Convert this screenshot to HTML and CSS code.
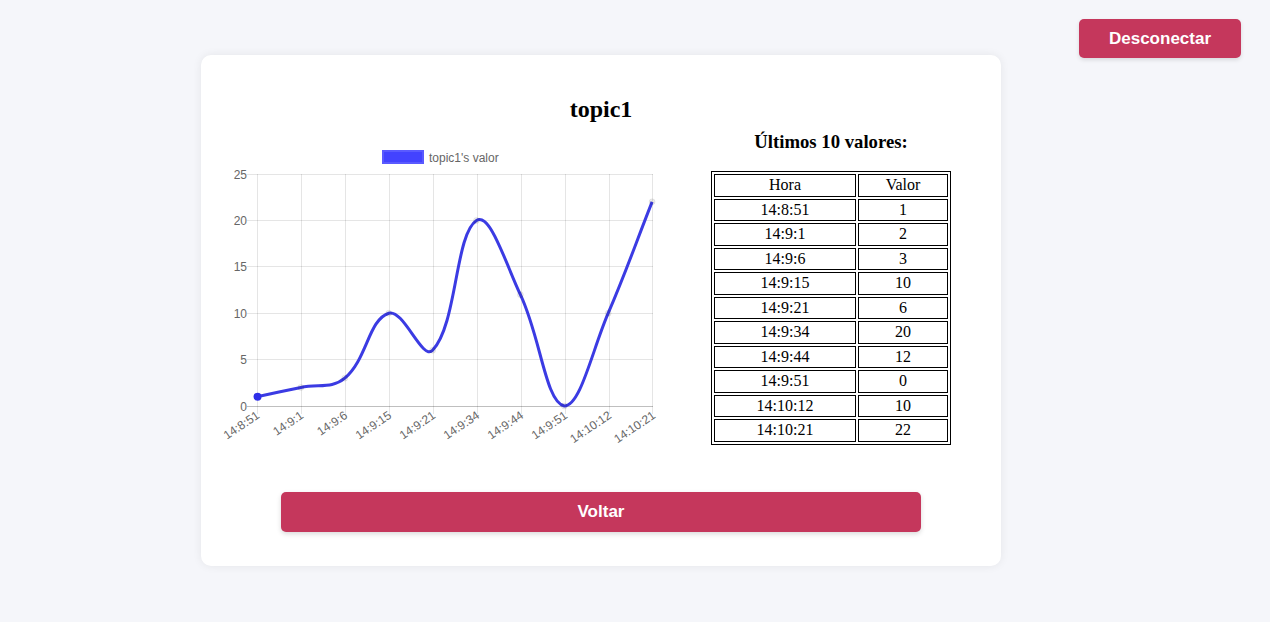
FILE: index.html
```html
<!DOCTYPE html>
<html lang="pt">
<head>
<meta charset="utf-8">
<title>topic1</title>
<link rel="stylesheet" href="styles.css">
</head>
<body>
<button class="logout">Desconectar</button>
<main class="card">
  <h2 class="title">topic1</h2>
  <div class="content">
    <div class="chart">
      <svg class="chart-svg" width="444" height="327" viewBox="217 123 444 327" xmlns="http://www.w3.org/2000/svg">
        <!-- legend -->
        <rect x="383" y="151" width="40" height="12" fill="#3333ff" fill-opacity="0.92" stroke="#5a5aff" stroke-width="2"/>
        <text class="tick" x="429" y="161.5">topic1's valor</text>
        <!-- grid -->
        <g class="grid" shape-rendering="crispEdges">
          <line x1="247" y1="174.5" x2="653" y2="174.5"/>
          <line x1="247" y1="220.5" x2="653" y2="220.5"/>
          <line x1="247" y1="266.5" x2="653" y2="266.5"/>
          <line x1="247" y1="313.5" x2="653" y2="313.5"/>
          <line x1="247" y1="359.5" x2="653" y2="359.5"/>
          <line x1="257.5" y1="174" x2="257.5" y2="414"/>
          <line x1="301.5" y1="174" x2="301.5" y2="414"/>
          <line x1="345.5" y1="174" x2="345.5" y2="414"/>
          <line x1="389.5" y1="174" x2="389.5" y2="414"/>
          <line x1="433.5" y1="174" x2="433.5" y2="414"/>
          <line x1="477.5" y1="174" x2="477.5" y2="414"/>
          <line x1="521.5" y1="174" x2="521.5" y2="414"/>
          <line x1="565.5" y1="174" x2="565.5" y2="414"/>
          <line x1="609.5" y1="174" x2="609.5" y2="414"/>
          <line x1="652.5" y1="174" x2="652.5" y2="414"/>
        </g>
        <line class="zero" x1="247" y1="406.5" x2="653" y2="406.5" shape-rendering="crispEdges"/>
        <!-- y labels -->
        <g class="tick" text-anchor="end">
          <text x="247" y="178.5">25</text>
          <text x="247" y="224.5">20</text>
          <text x="247" y="270.5">15</text>
          <text x="247" y="317.5">10</text>
          <text x="247" y="363.5">5</text>
          <text x="247" y="410.5">0</text>
        </g>
        <!-- x labels -->
        <g class="tick" text-anchor="end">
          <text transform="translate(258 414) rotate(-34)" y="4">14:8:51</text>
          <text transform="translate(302 414) rotate(-34)" y="4">14:9:1</text>
          <text transform="translate(346 414) rotate(-34)" y="4">14:9:6</text>
          <text transform="translate(390 414) rotate(-34)" y="4">14:9:15</text>
          <text transform="translate(434 414) rotate(-34)" y="4">14:9:21</text>
          <text transform="translate(478 414) rotate(-34)" y="4">14:9:34</text>
          <text transform="translate(522 414) rotate(-34)" y="4">14:9:44</text>
          <text transform="translate(566 414) rotate(-34)" y="4">14:9:51</text>
          <text transform="translate(610 414) rotate(-34)" y="4">14:10:12</text>
          <text transform="translate(654 414) rotate(-34)" y="4">14:10:21</text>
        </g>
        <!-- data line -->
        <path class="line" d="M257,396.72 C274.56,393.01 283.34,391.15 300.9,387.44 C318.46,383.73 332.02,388.97 344.8,378.16 C367.14,359.27 368.44,319.63 388.7,313.2 C403.56,308.49 422.22,361.29 432.6,350.32 C457.34,324.17 454.94,234.07 476.5,220.4 C490.06,211.8 505.69,263.55 520.4,294.64 C540.81,337.79 545.4,402 564.3,406 C580.52,406 591.98,350.91 608.2,313.2 C627.1,269.24 634.54,246.38 652.1,201.84"/>
        <g class="pt">
          <circle cx="300.9" cy="387.44" r="3"/>
          <circle cx="344.8" cy="378.16" r="3"/>
          <circle cx="388.7" cy="313.2" r="3"/>
          <circle cx="432.6" cy="350.32" r="3"/>
          <circle cx="476.5" cy="220.4" r="3"/>
          <circle cx="520.4" cy="294.64" r="3"/>
          <circle cx="564.3" cy="406" r="3"/>
          <circle cx="608.2" cy="313.2" r="3"/>
          <circle cx="652.1" cy="201.84" r="3"/>
        </g>
        <circle class="pt-active" cx="257.5" cy="396.72" r="4"/>
      </svg>
    </div>
    <div class="latest">
      <h3 class="latest-title">Últimos 10 valores:</h3>
      <table class="values" border="1">
        <thead>
          <tr><th class="col-hora">Hora</th><th class="col-valor">Valor</th></tr>
        </thead>
        <tbody>
          <tr><td>14:8:51</td><td>1</td></tr>
          <tr><td>14:9:1</td><td>2</td></tr>
          <tr><td>14:9:6</td><td>3</td></tr>
          <tr><td>14:9:15</td><td>10</td></tr>
          <tr><td>14:9:21</td><td>6</td></tr>
          <tr><td>14:9:34</td><td>20</td></tr>
          <tr><td>14:9:44</td><td>12</td></tr>
          <tr><td>14:9:51</td><td>0</td></tr>
          <tr><td>14:10:12</td><td>10</td></tr>
          <tr><td>14:10:21</td><td>22</td></tr>
        </tbody>
      </table>
    </div>
  </div>
  <button class="back">Voltar</button>
</main>
</body>
</html>
```
FILE: styles.css
```css
html, body {
  margin: 0;
  padding: 0;
}
body {
  background: #f5f6fa;
  font-family: "Liberation Serif", "Times New Roman", serif;
  color: #000;
  min-height: 622px;
  position: relative;
}
.logout {
  position: absolute;
  top: 19px;
  right: 29px;
  width: 162px;
  height: 39px;
  border: none;
  border-radius: 5px;
  background: #c5375c;
  color: #fff;
  font-family: "Liberation Sans", Arial, sans-serif;
  font-weight: bold;
  font-size: 17px;
  box-shadow: 0 2px 4px rgba(0, 0, 0, 0.12);
  cursor: pointer;
}
.card {
  display: block;
  box-sizing: border-box;
  width: 800px;
  margin: 55px 0 0 201px;
  padding: 40px 0 34px;
  background: #fff;
  border-radius: 10px;
  box-shadow: 0 0 10px rgba(0, 0, 0, 0.07);
}
.title {
  margin: 0;
  font-size: 24px;
  line-height: 28px;
  font-weight: bold;
  text-align: center;
}
.content {
  display: flex;
  align-items: flex-start;
  padding-left: 16px;
  gap: 50px;
}
.chart {
  width: 444px;
  height: 327px;
}
.chart-svg {
  display: block;
}
.tick {
  font-family: "Liberation Sans", Arial, sans-serif;
  font-size: 12px;
  fill: #666;
}
.grid line {
  stroke: rgba(0, 0, 0, 0.1);
  stroke-width: 1;
}
.zero {
  stroke: rgba(0, 0, 0, 0.25);
  stroke-width: 1;
}
.line {
  fill: none;
  stroke: #3b3be3;
  stroke-width: 3;
  stroke-linejoin: round;
}
.pt circle {
  fill: rgba(0, 0, 0, 0.08);
  stroke: rgba(0, 0, 0, 0.06);
  stroke-width: 1;
}
.pt-active {
  fill: #2e2ee8;
}
.latest {
  width: 240px;
  display: flex;
  flex-direction: column;
  align-items: center;
}
.latest-title {
  margin: 8px 0 18px;
  font-size: 18.72px;
  line-height: 22px;
  font-weight: bold;
  white-space: nowrap;
}
.values {
  border: 1px solid #000;
  border-spacing: 2px;
  font-size: 16px;
}
.values th,
.values td {
  border: 1px solid #000;
  padding: 1px;
  text-align: center;
  font-weight: normal;
  line-height: 18.5px;
}
.col-hora {
  width: 138px;
}
.col-valor {
  width: 86px;
}
.back {
  display: block;
  width: 640px;
  height: 40px;
  margin: 42px auto 0;
  border: none;
  border-radius: 5px;
  background: #c5375c;
  color: #fff;
  font-family: "Liberation Sans", Arial, sans-serif;
  font-weight: bold;
  font-size: 17px;
  box-shadow: 0 2px 5px rgba(0, 0, 0, 0.15);
  cursor: pointer;
}
```
